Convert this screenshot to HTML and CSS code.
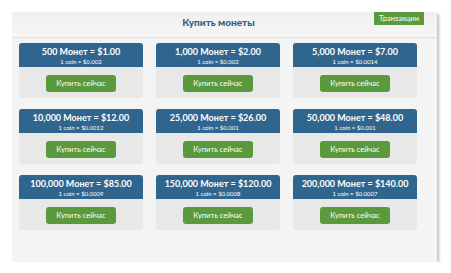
FILE: index.html
```html
<!DOCTYPE html>
<html lang="ru">
<head>
    <meta charset="UTF-8">
    <meta name="viewport" content="width=device-width, initial-scale=1.0">
    <title>Купить монеты</title>
    <link rel="stylesheet" href="styles.css">
</head>
<body>

<!-- Панель покупки -->
<div class="panel">
    <div class="panel-header">
        <span></span>
        <h1 class="panel-title">Купить монеты</h1>
        <button class="tx-button">Транзакции</button>
    </div>

    <div class="packs">
        <div class="pack">
            <div class="pack-head">
                <div class="pack-price">500 Монет = $1.00</div>
                <div class="pack-rate">1 coin = $0.002</div>
            </div>
            <div class="pack-body"><button class="buy-button">Купить сейчас</button></div>
        </div>
        <div class="pack">
            <div class="pack-head">
                <div class="pack-price">1,000 Монет = $2.00</div>
                <div class="pack-rate">1 coin = $0.002</div>
            </div>
            <div class="pack-body"><button class="buy-button">Купить сейчас</button></div>
        </div>
        <div class="pack">
            <div class="pack-head">
                <div class="pack-price">5,000 Монет = $7.00</div>
                <div class="pack-rate">1 coin = $0.0014</div>
            </div>
            <div class="pack-body"><button class="buy-button">Купить сейчас</button></div>
        </div>
        <div class="pack">
            <div class="pack-head">
                <div class="pack-price">10,000 Монет = $12.00</div>
                <div class="pack-rate">1 coin = $0.0012</div>
            </div>
            <div class="pack-body"><button class="buy-button">Купить сейчас</button></div>
        </div>
        <div class="pack">
            <div class="pack-head">
                <div class="pack-price">25,000 Монет = $26.00</div>
                <div class="pack-rate">1 coin = $0.001</div>
            </div>
            <div class="pack-body"><button class="buy-button">Купить сейчас</button></div>
        </div>
        <div class="pack">
            <div class="pack-head">
                <div class="pack-price">50,000 Монет = $48.00</div>
                <div class="pack-rate">1 coin = $0.001</div>
            </div>
            <div class="pack-body"><button class="buy-button">Купить сейчас</button></div>
        </div>
        <div class="pack">
            <div class="pack-head">
                <div class="pack-price">100,000 Монет = $85.00</div>
                <div class="pack-rate">1 coin = $0.0009</div>
            </div>
            <div class="pack-body"><button class="buy-button">Купить сейчас</button></div>
        </div>
        <div class="pack">
            <div class="pack-head">
                <div class="pack-price">150,000 Монет = $120.00</div>
                <div class="pack-rate">1 coin = $0.0008</div>
            </div>
            <div class="pack-body"><button class="buy-button">Купить сейчас</button></div>
        </div>
        <div class="pack">
            <div class="pack-head">
                <div class="pack-price">200,000 Монет = $140.00</div>
                <div class="pack-rate">1 coin = $0.0007</div>
            </div>
            <div class="pack-body"><button class="buy-button">Купить сейчас</button></div>
        </div>
    </div>
</div>

</body>
</html>
```

FILE: styles.css
```css
/* Общие стили */
body {
    margin: 0;
    padding: 12px 0 0 12px;
    background-color: #ffffff;
    font-family: 'Lato', 'Open Sans', sans-serif;
}

/* Панель */
.panel {
    width: 425px;
    height: 250px;
    background-color: #f4f4f4;
    box-shadow: 2px 2px 3px rgba(0, 0, 0, 0.25);
}

.panel-header {
    height: 25px;
    display: grid;
    grid-template-columns: 1fr auto 1fr;
    align-items: start;
    border-bottom: 1px solid #e2e2e2;
    background: linear-gradient(#f0f0f0, #f6f6f6);
}

.panel-title {
    margin: 0;
    padding-top: 4px;
    padding-right: 12px;
    font-size: 10px;
    font-weight: 900;
    color: #2f5f86;
}

.tx-button {
    justify-self: end;
    margin-right: 13px;
    height: 13px;
    padding: 0 5px;
    border: none;
    background-color: #5b9a3c;
    color: #ffffff;
    font-family: 'Lato', sans-serif;
    font-size: 7.5px;
}

/* Пакеты монет */
.packs {
    display: grid;
    grid-template-columns: repeat(3, 124px);
    column-gap: 13px;
    row-gap: 11px;
    padding: 5px 0 0 7px;
}

.pack {
    height: 55px;
    display: flex;
    flex-direction: column;
    background-color: #e8e8e8;
    border-radius: 3px;
}

.pack-head {
    height: 24px;
    background-color: #30658e;
    border-radius: 3px 3px 0 0;
    color: #ffffff;
    text-align: center;
}

.pack-price {
    padding-top: 3px;
    font-size: 9px;
    font-weight: bold;
    line-height: 12px;
}

.pack-rate {
    font-size: 6px;
    line-height: 7px;
}

.pack-body {
    display: flex;
    justify-content: center;
    padding-top: 8px;
}

.buy-button {
    width: 70px;
    height: 17px;
    padding: 0;
    border: none;
    border-radius: 3px;
    background-color: #5b9a3c;
    color: #ffffff;
    font-family: 'Lato', sans-serif;
    font-size: 7.5px;
    cursor: pointer;
}
```
